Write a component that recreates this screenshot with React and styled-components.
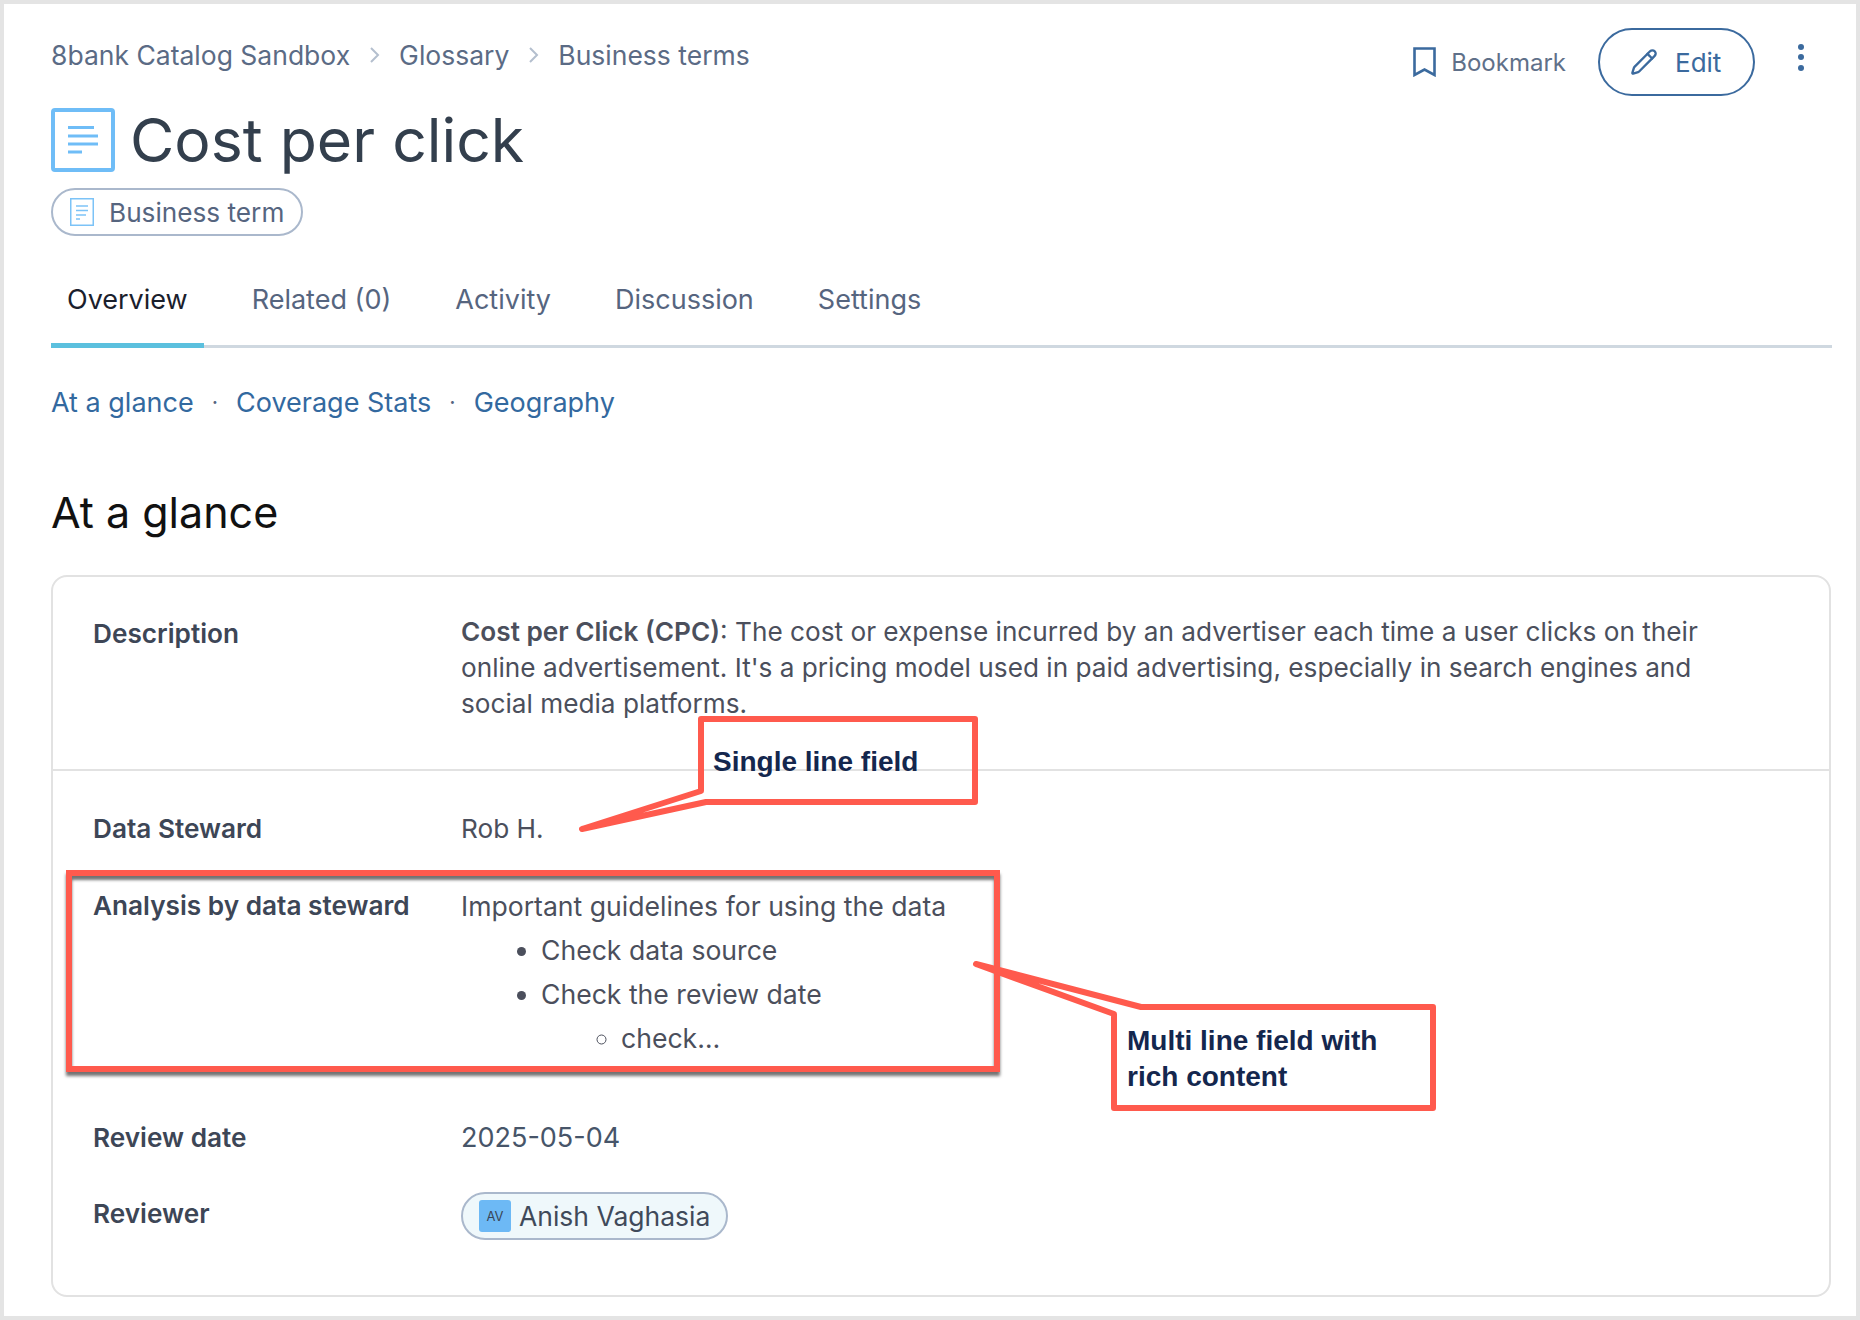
import styled, { createGlobalStyle } from "styled-components";
import { LuPencil } from "react-icons/lu";

const GlobalStyle = createGlobalStyle`
  * { box-sizing: border-box; }
  body {
    margin: 0;
    background: #ffffff;
    font-family: "Inter", "Liberation Sans", sans-serif;
  }
`;

const Page = styled.div`
  position: relative;
  width: 1860px;
  height: 1320px;
  border: 4px solid #e4e4e4;
  padding: 0 24px 0 47px;
  background: #ffffff;
  overflow: hidden;
`;

const Header = styled.header`
  display: flex;
  justify-content: space-between;
  align-items: flex-start;
  height: 278px;
`;

const HeaderLeft = styled.div`
  display: flex;
  flex-direction: column;
  align-items: flex-start;
  padding-top: 33px;
`;

const Breadcrumb = styled.nav`
  display: flex;
  align-items: center;
  height: 36px;
  font-size: 26.5px;
  color: #5b6b85;
`;

const Crumb = styled.span`
  white-space: nowrap;
`;

const CrumbArrow = styled.svg`
  width: 12px;
  height: 18px;
  margin: 0 18.5px;
  fill: none;
  stroke: #b4bfce;
  stroke-width: 2;
`;

const TitleRow = styled.div`
  display: flex;
  align-items: center;
  gap: 15px;
  margin-top: 35px;
  height: 64px;
`;

const TermIcon = styled.svg`
  display: block;
  width: ${(p) => p.$w}px;
  height: ${(p) => p.$h}px;
  flex: none;
`;

const Title = styled.h1`
  margin: 0;
  font-size: 60.7px;
  font-weight: 400;
  color: #333f4d;
  white-space: nowrap;
`;

const TypeChip = styled.div`
  display: flex;
  align-items: center;
  gap: 15px;
  height: 48px;
  margin-top: 16px;
  padding: 0 17px;
  border: 2px solid #aab8cc;
  border-radius: 24px;
  font-size: 26.2px;
  color: #56657f;
`;

const Actions = styled.div`
  display: flex;
  align-items: center;
  padding: 24px 28px 0 0;
`;

const BookmarkButton = styled.div`
  display: flex;
  align-items: center;
  gap: 15px;
  font-size: 24px;
  color: #5f7089;
`;

const BookmarkIcon = styled.svg`
  width: 23px;
  height: 30px;
  fill: none;
  stroke: #3b6a9e;
  stroke-width: 2.6;
`;

const EditButton = styled.div`
  display: flex;
  align-items: center;
  gap: 17px;
  height: 68px;
  width: 157px;
  margin-left: 32px;
  padding-left: 30px;
  border: 2px solid #3b6a9e;
  border-radius: 34px;
  font-size: 26px;
  color: #3b6a9e;
`;

const MoreDots = styled.div`
  display: flex;
  flex-direction: column;
  gap: 4.5px;
  margin: -10px 0 0 43px;
  span {
    width: 6px;
    height: 6px;
    border-radius: 50%;
    background: #3b6a9e;
  }
`;

const Tabs = styled.div`
  display: flex;
  height: 66px;
  border-bottom: 3px solid #cfd8e0;
`;

const Tab = styled.div`
  height: 66px;
  padding: 0 16px;
  margin-right: 32px;
  font-size: 27px;
  line-height: 36px;
  white-space: nowrap;
  color: ${(p) => (p.$active ? "#1a202c" : "#56657f")};
  border-bottom: ${(p) => (p.$active ? "5px solid #5bc0de" : "none")};
`;

const Anchors = styled.div`
  display: flex;
  align-items: center;
  gap: 18px;
  margin-top: 36px;
  height: 36px;
  font-size: 27px;
  color: #33699f;
`;

const AnchorDot = styled.span`
  color: #56657f;
  font-size: 22px;
`;

const SectionTitle = styled.h2`
  margin: 68px 0 0;
  height: 48px;
  line-height: 48px;
  font-size: 43px;
  font-weight: 400;
  color: #111111;
`;

const Card = styled.section`
  width: 1780px;
  height: 722px;
  margin-top: 39px;
  border: 2px solid #e2e2e2;
  border-radius: 16px;
  color: #4b4f5c;
`;

const Row = styled.div`
  display: grid;
  grid-template-columns: 368px 1fr;
  padding: ${(p) => p.$pad || "0"};
  padding-left: 40px;
  padding-right: 100px;
  border-bottom: ${(p) => (p.$divider ? "2px solid #e2e2e2" : "none")};
  height: ${(p) => p.$height}px;
`;

const Label = styled.div`
  font-size: 26.2px;
  line-height: 36px;
  font-weight: 600;
  color: #3d4656;
  padding-top: ${(p) => p.$top || 0}px;
`;

const Value = styled.div`
  font-size: ${(p) => p.$size || 26.2}px;
  line-height: 36px;
  color: ${(p) => p.$color || "#4b4f5c"};
  strong {
    font-weight: 600;
  }
`;

const RichList = styled.ul`
  margin: 7px 0 0;
  padding-left: 80px;
  list-style: disc;
  ul {
    padding-left: 80px;
    list-style: circle;
  }
`;

const RichItem = styled.li`
  margin-top: 8px;
  line-height: 36px;
  &:first-child {
    margin-top: 0;
  }
  ul > &:first-child {
    margin-top: 8px;
  }
  &::marker {
    color: #4b4f5c;
  }
`;

const PersonChip = styled.div`
  display: inline-flex;
  align-items: center;
  gap: 8px;
  height: 48px;
  margin-top: -4px;
  padding: 0 16px;
  border: 2px solid #aab8cc;
  border-radius: 24px;
  background: #eff8fb;
  font-size: 26.5px;
  color: #3f4a5a;
`;

const Avatar = styled.span`
  display: flex;
  align-items: center;
  justify-content: center;
  width: 32px;
  height: 32px;
  border-radius: 3px;
  background: #6db9f5;
  font-size: 13px;
  color: #3a4656;
`;

const Highlight = styled.div`
  position: absolute;
  left: 62px;
  top: 866px;
  width: 934px;
  height: 202px;
  border: 6px solid #ff5a4d;
  box-shadow: 0 4px 3px rgba(0, 0, 0, 0.55), inset 0 4px 3px rgba(0, 0, 0, 0.55);
`;

const CalloutShape = styled.svg`
  position: absolute;
  left: -4px;
  top: -4px;
  width: 1860px;
  height: 1320px;
  pointer-events: none;
  fill: none;
  stroke: #ff5a4d;
  stroke-width: 6;
  stroke-linejoin: round;
  stroke-linecap: round;
`;

const CalloutText = styled.div`
  position: absolute;
  left: ${(p) => p.$left}px;
  top: ${(p) => p.$top}px;
  font-family: "Liberation Sans", Arial, sans-serif;
  font-size: 28px;
  line-height: 36px;
  font-weight: 700;
  color: #14274e;
  white-space: nowrap;
`;

const DocIcon = ({ w, h }) => (
  <TermIcon $w={w} $h={h} viewBox="0 0 64 64">
    <rect x="2" y="2" width="60" height="60" rx="2" fill="#fff" stroke="#6fbdf7" strokeWidth="4" />
    <g stroke="#6fbdf7" strokeWidth="3">
      <line x1="17" y1="19.5" x2="43" y2="19.5" />
      <line x1="17" y1="28" x2="47" y2="28" />
      <line x1="17" y1="36" x2="47" y2="36" />
      <line x1="17" y1="44" x2="31" y2="44" />
    </g>
  </TermIcon>
);

const ChipIcon = () => (
  <TermIcon $w={24} $h={28} viewBox="0 0 24 28">
    <rect x="0.75" y="0.75" width="22.5" height="26.5" fill="#fff" stroke="#7cc3f7" strokeWidth="1.5" />
    <g stroke="#7cc3f7" strokeWidth="1.5">
      <line x1="6" y1="8" x2="18" y2="8" />
      <line x1="6" y1="12.5" x2="18" y2="12.5" />
      <line x1="6" y1="17" x2="16" y2="17" />
      <line x1="6" y1="21" x2="10" y2="21" />
    </g>
  </TermIcon>
);

const Arrow = () => (
  <CrumbArrow viewBox="0 0 12 18">
    <path d="M2 2l7 7-7 7" />
  </CrumbArrow>
);

const App = () => {
  return (
    <>
      <GlobalStyle />
      <Page>
        <Header>
          <HeaderLeft>
            <Breadcrumb>
              <Crumb>8bank Catalog Sandbox</Crumb>
              <Arrow />
              <Crumb>Glossary</Crumb>
              <Arrow />
              <Crumb>Business terms</Crumb>
            </Breadcrumb>
            <TitleRow>
              <DocIcon w={64} h={64} />
              <Title>Cost per click</Title>
            </TitleRow>
            <TypeChip>
              <ChipIcon />
              Business term
            </TypeChip>
          </HeaderLeft>
          <Actions>
            <BookmarkButton>
              <BookmarkIcon viewBox="0 0 23 30">
                <path d="M1.5 1.5H21.5V28L11.5 22.5L1.5 28Z" />
              </BookmarkIcon>
              Bookmark
            </BookmarkButton>
            <EditButton>
              <LuPencil size={28} />
              Edit
            </EditButton>
            <MoreDots>
              <span />
              <span />
              <span />
            </MoreDots>
          </Actions>
        </Header>

        <Tabs>
          <Tab $active>Overview</Tab>
          <Tab>Related (0)</Tab>
          <Tab>Activity</Tab>
          <Tab>Discussion</Tab>
          <Tab>Settings</Tab>
        </Tabs>

        <Anchors>
          <span>At a glance</span>
          <AnchorDot>·</AnchorDot>
          <span>Coverage Stats</span>
          <AnchorDot>·</AnchorDot>
          <span>Geography</span>
        </Anchors>

        <SectionTitle>At a glance</SectionTitle>

        <Card>
          <Row $divider $height={194} $pad="37px 0 0">
            <Label $top={2}>Description</Label>
            <Value>
              <strong>Cost per Click (CPC)</strong>: The cost or expense incurred by an advertiser each time a user
              clicks on their online advertisement. It's a pricing model used in paid advertising, especially in search
              engines and social media platforms.
            </Value>
          </Row>
          <Row $height={77} $pad="40px 0 0">
            <Label>Data Steward</Label>
            <Value>Rob H.</Value>
          </Row>
          <Row $height={272} $pad="40px 0 0">
            <Label>Analysis by data steward</Label>
            <Value $size={26.6}>
              Important guidelines for using the data
              <RichList>
                <RichItem>Check data source</RichItem>
                <RichItem>
                  Check the review date
                  <ul>
                    <RichItem>check…</RichItem>
                  </ul>
                </RichItem>
              </RichList>
            </Value>
          </Row>
          <Row $height={76} $pad="0">
            <Label>Review date</Label>
            <Value $color="#475569" $size={27}>
              2025-05-04
            </Value>
          </Row>
          <Row $height={60} $pad="0">
            <Label>Reviewer</Label>
            <div>
              <PersonChip>
                <Avatar>AV</Avatar>
                Anish Vaghasia
              </PersonChip>
            </div>
          </Row>
        </Card>

        <Highlight />
        <CalloutShape viewBox="0 0 1860 1320">
          <path d="M701 791 L582 829 L706 802 L975 802 L975 719 L701 719 Z" />
          <path d="M1114 1014 L976 964 L1141 1007 L1433 1007 L1433 1108 L1114 1108 Z" />
        </CalloutShape>
        <CalloutText $left={709} $top={740}>
          Single line field
        </CalloutText>
        <CalloutText $left={1123} $top={1019}>
          Multi line field with
          <br />
          rich content
        </CalloutText>
      </Page>
    </>
  );
};

export default App;
